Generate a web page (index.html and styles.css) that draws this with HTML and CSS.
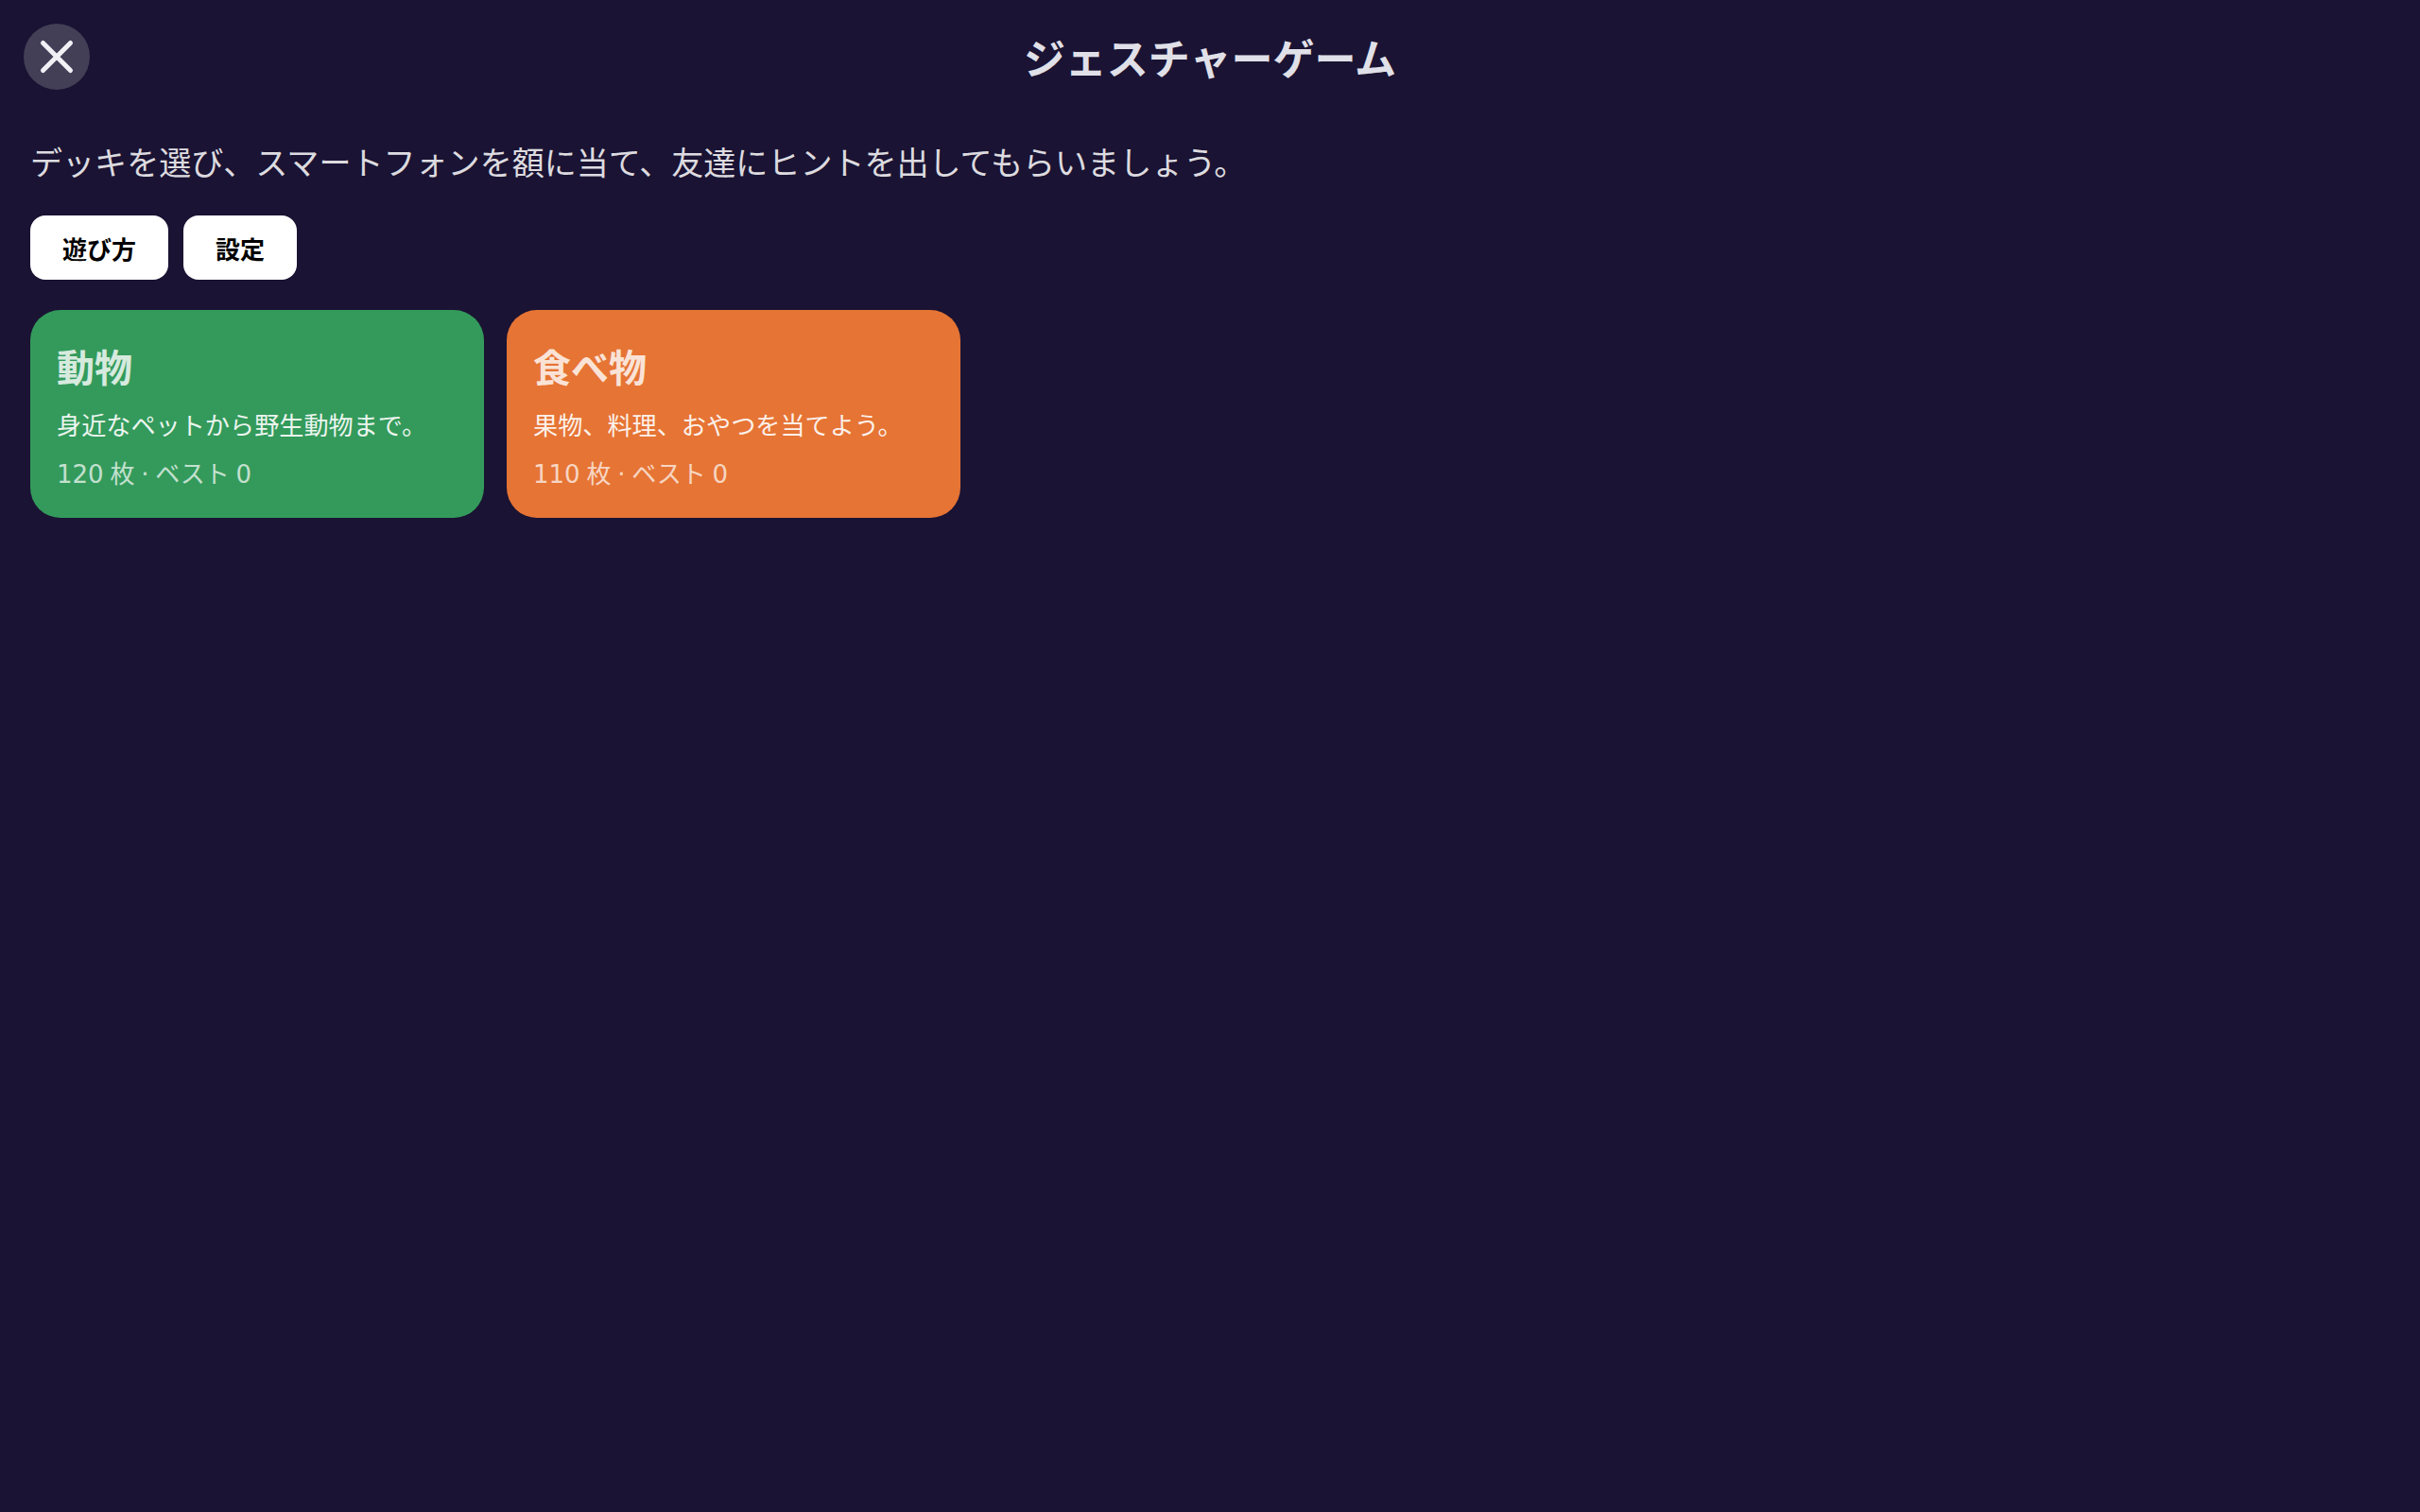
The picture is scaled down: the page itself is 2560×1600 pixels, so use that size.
FILE: index.html
```html
<html>

<head>
  <meta charset="utf-8">
  <link rel="stylesheet" href="styles.css">
</head>

<body>

  <div class="header">
    <button class="close-btn">
      <svg class="close-icon" viewBox="0 0 70 70">
        <path d="M20.5 20.5 L49.5 49.5 M49.5 20.5 L20.5 49.5" />
      </svg>
    </button>
    <h1 class="title">ジェスチャーゲーム</h1>
  </div>

  <div class="container">
    <p class="intro">デッキを選び、スマートフォンを額に当て、友達にヒントを出してもらいましょう。</p>

    <div class="actions">
      <button class="action-btn">遊び方</button>
      <button class="action-btn">設定</button>
    </div>

    <div class="decks">
      <div class="deck deck-green">
        <h2 class="deck-title">動物</h2>
        <p class="deck-desc">身近なペットから野生動物まで。</p>
        <p class="deck-meta">120 枚 · ベスト 0</p>
      </div>
      <div class="deck deck-orange">
        <h2 class="deck-title">食べ物</h2>
        <p class="deck-desc">果物、料理、おやつを当てよう。</p>
        <p class="deck-meta">110 枚 · ベスト 0</p>
      </div>
    </div>
  </div>

</body>

</html>
```

FILE: styles.css
```css
html,
body {
  height: 100%;
}

body {
  margin: 0;
  background-color: #1a1333;
  color: #e0e0e8;
  font-family: "DejaVu Sans", "Noto Sans CJK JP", sans-serif;
}

.header {
  display: grid;
  grid-template-columns: 1fr auto 1fr;
  align-items: center;
  padding: 25px 25px 0;
}

.close-btn {
  width: 70px;
  height: 70px;
  padding: 0;
  border: none;
  border-radius: 50%;
  background-color: #433f57;
}

.close-icon {
  display: block;
  width: 70px;
  height: 70px;
}

.close-icon path {
  fill: none;
  stroke: #f1f1f5;
  stroke-width: 5;
  stroke-linecap: round;
}

.title {
  margin: 0;
  font-size: 44px;
  font-weight: 700;
}

.container {
  padding: 0 32px;
}

.intro {
  margin: 51px 0 0;
  color: #fff;
  font-size: 34.06px;
  line-height: 54px;
  opacity: 0.85;
}

.actions {
  display: flex;
  gap: 16px;
  margin-top: 28px;
}

.action-btn {
  height: 68px;
  padding: 0 34px;
  border: none;
  border-radius: 16px;
  background-color: #fff;
  color: #000;
  font-family: inherit;
  font-size: 26px;
  font-weight: 700;
}

.decks {
  display: flex;
  gap: 24px;
  margin-top: 32px;
}

.deck {
  box-sizing: border-box;
  width: 480px;
  height: 220px;
  padding: 32px 28px 28px;
  border-radius: 32px;
  color: #fff;
}

.deck-green {
  background-color: #339a5b;
}

.deck-orange {
  background-color: #e67434;
}

.deck-title {
  margin: 0;
  font-size: 40px;
  font-weight: 700;
  line-height: 60px;
  opacity: 0.8;
}

.deck-desc {
  margin: 11px 0 0;
  font-size: 26.15px;
  line-height: 40px;
  opacity: 0.9;
}

.deck-meta {
  margin: 11px 0 0;
  font-size: 26px;
  line-height: 40px;
  word-spacing: -1.5px;
  opacity: 0.7;
}
```
